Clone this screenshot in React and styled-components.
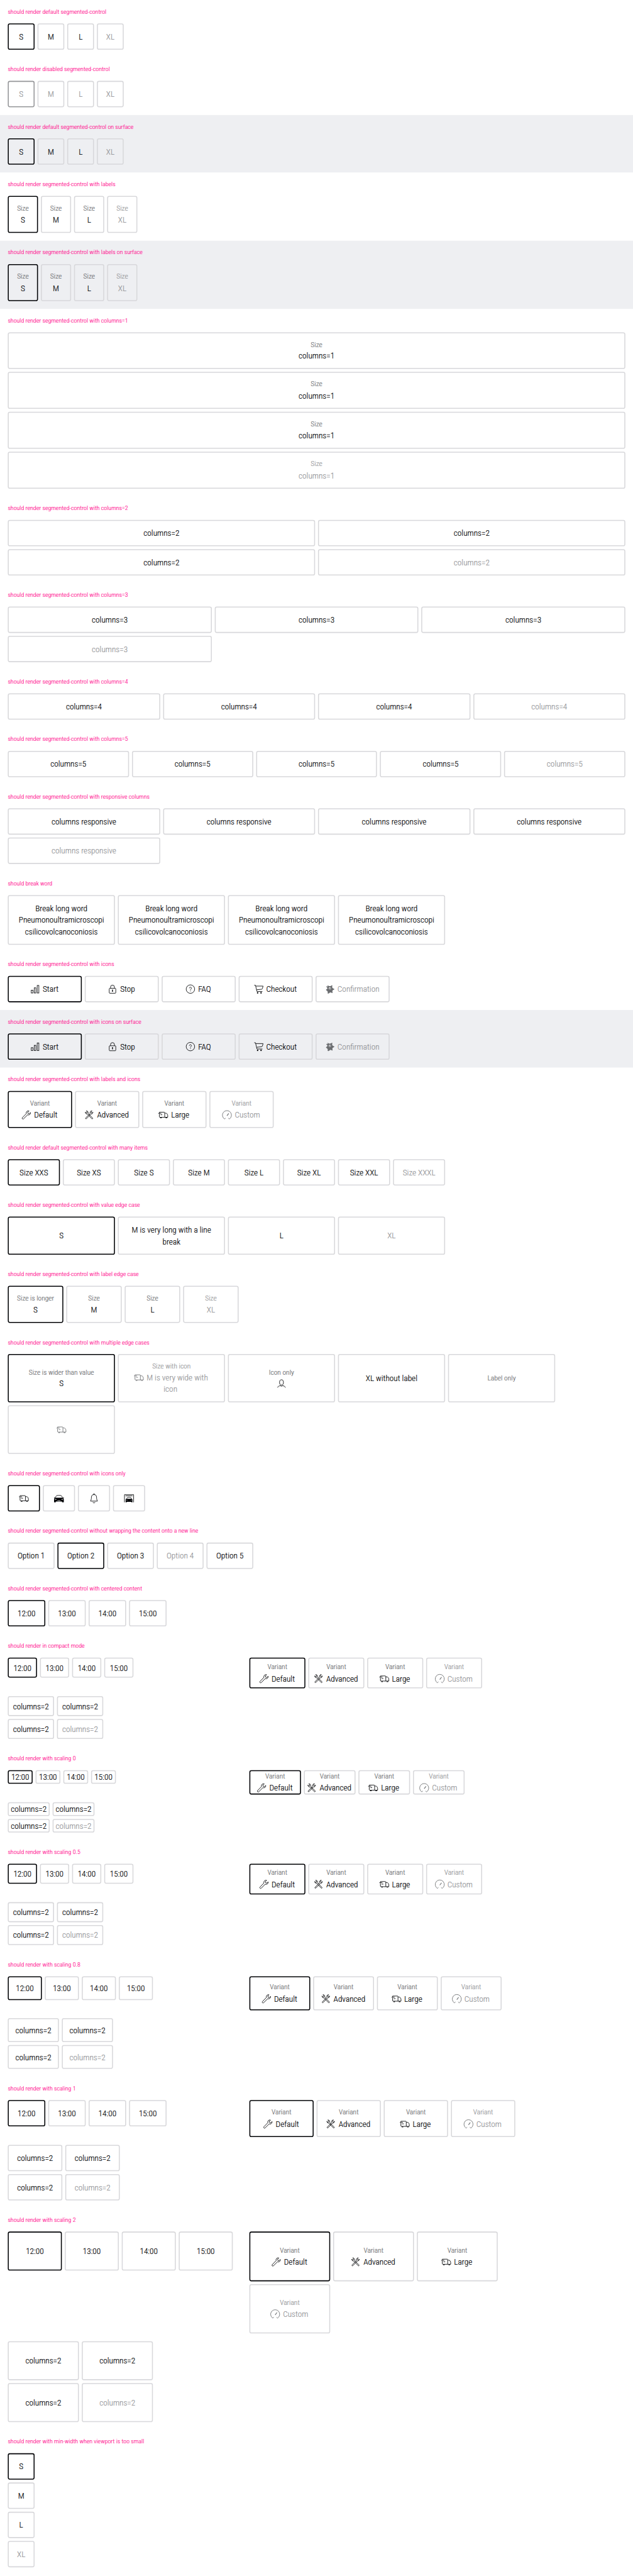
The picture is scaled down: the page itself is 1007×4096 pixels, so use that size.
import React from "react";
import styled, { createGlobalStyle, css } from "styled-components";

const color = {
  primary: "#010205",
  medium: "#6b6d70",
  disabled: "#949598",
  border: "#d8d8db",
  surface: "#eeeff2",
  heading: "#ff1493",
};

const GlobalStyle = createGlobalStyle`
  body {
    margin: 0;
    background: #fff;
    color: ${color.primary};
    font-family: "Roboto Condensed", Roboto, "Liberation Sans", sans-serif;
    font-weight: 300;
    -webkit-text-stroke: 0.22px currentColor;
  }
`;

const Viewport = styled.div`
  width: 1007px;
  height: 4096px;
  overflow: hidden;
`;

const Page = styled.main`
  width: 1300px;
  transform: scale(0.77475);
  transform-origin: 0 0;
  margin-right: -293px;
`;

const Section = styled.section`
  display: flex;
  flex-direction: column;
  gap: 16px;
  padding: 16px;
  background: ${(p) => (p.$surface ? color.surface : "transparent")};
`;

const Heading = styled.h2`
  margin: 0;
  height: 16px;
  font-size: 12.85px;
  line-height: 16px;
  font-weight: 300;
  color: ${color.heading};
  white-space: nowrap;
`;

const Group = styled.div`
  display: grid;
  grid-template-columns: repeat(${(p) => p.$cols}, ${(p) => (p.$width ? `${p.$width}px` : "1fr")});
  grid-auto-rows: 1fr;
  gap: 6px;
  align-self: start;
  width: ${(p) => (p.$width ? "max-content" : "100%")};
`;

const Segment = styled.button`
  display: flex;
  flex-direction: column;
  align-items: center;
  justify-content: center;
  box-sizing: border-box;
  margin: 0;
  padding: ${(p) => 13 * p.$scale}px 0;
  border: 2px solid ${color.border};
  border-radius: 4px;
  background: transparent;
  font: inherit;
  color: ${color.primary};
  white-space: nowrap;

  ${(p) => p.$selected && css`border-color: ${p.disabled ? color.disabled : color.primary};`}
  ${(p) => p.disabled && css`color: ${color.disabled};`}
`;

const Label = styled.span`
  font-size: 14.8px;
  line-height: 21.83px;
  color: ${(p) => (p.$disabled ? color.disabled : color.medium)};
`;

const Value = styled.span`
  display: block;
  font-size: 17.15px;
  line-height: 24px;
  text-align: center;
`;

const Line = styled.span`
  display: block;
  margin-left: ${(p) => (p.$hang ? "-4px" : "0")};
`;

const IconSvg = styled.svg`
  width: 24px;
  height: 24px;
  vertical-align: top;
  margin: ${(p) => (p.$alone ? "0" : "0 4px 0 -4px")};
  fill: none;
  stroke: currentColor;
  stroke-width: 1.1;
  color: ${(p) => (p.$disabled ? color.medium : color.primary)};

  .solid {
    fill: currentColor;
    stroke: none;
  }
`;

const Showcase = styled.div`
  display: grid;
  grid-template-columns: 480px 1fr;
  gap: 16px;
`;

const slimWrench =
  "M19.7 6.4l-1.6 2.200-1.800-.7-.1-2.100 1.600-1.900a3.600 3.600 0 0 0-3.600 5L4.900 18.600a1.050 1.050 0 0 0 1.600 1.400l9.300-9.600a3.600 3.600 0 0 0 3.900-4z";

const icons = {
  bars: (
    <>
      <rect x="4.2" y="14.2" width="3.4" height="5.8" />
      <rect x="10.3" y="9.4" width="3.4" height="10.6" />
      <rect x="16.4" y="4.5" width="3.4" height="15.5" />
    </>
  ),
  lock: (
    <>
      <rect x="5.3" y="10.3" width="13.4" height="10.2" rx="1.2" />
      <path d="M8 10.3V7.8a4 4 0 0 1 8 0v2.5" />
      <path d="M12 13v4.5" strokeWidth="1.8" />
    </>
  ),
  question: (
    <>
      <circle cx="12" cy="12" r="8.7" />
      <path d="M9.9 10.2c0-1.3.9-2.1 2.1-2.1s2.1.8 2.1 2c0 1.6-2 1.9-2 3.7" />
      <path d="M12.1 15.1v1.4" />
    </>
  ),
  cart: (
    <>
      <path d="M3 4h2.6l3 12.9h11.2" />
      <path d="M6.2 5.8h15l-1.4 5c-.3 1-.9 1.4-1.8 1.5L7.9 13.4" />
      <circle className="solid" cx="10" cy="19.8" r="1.5" />
      <circle className="solid" cx="17" cy="19.8" r="1.5" />
    </>
  ),
  blob: (
    <>
      <path
        className="solid"
        fillRule="evenodd"
        d="M7.5 4.200L11 6l2.600-.2L16.800 4l.6.5-.4 3.700 1.200 2 3.300 1.600-.1 1-3 1.500-.9 1.700.4 3.600-.8.500-3-1.400-1.800.5-2.300 1.800-2.200-.1.200-3-1-2-2.600-2 .2-.9 2.300-1.500.4-1.900-2.500-2.600.6-.7 2.500.5zM12.300 8.200a2.200 2.200 0 1 0 .01 0z"
      />
      <path className="solid" d="M11 10.500l2.200-1.300.9 1.600-1.500.6-.5 1.300z" />
    </>
  ),
  wrench: (
    <path d="M20.6 7.200l-2.600 2.600-2.400-.7-.7-2.400 2.600-2.600a4.300 4.300 0 0 0-5.500 5.400L3.900 17.900a1.700 1.700 0 0 0 2.400 2.400l8.400-8.300a4.300 4.300 0 0 0 5.900-4.800z" />
  ),
  tools: (
    <>
      <path d={slimWrench} />
      <path d={slimWrench} transform="matrix(-1 0 0 1 24 0)" />
    </>
  ),
  van: (
    <>
      <path d="M4.200 8.500V6.600h9.900c.7 0 1.100.4 1.100 1.100v9.400M4.200 10v6c0 .7.3 1.100 1 1.100h16.200v-3.600c0-2.600-1.900-4.900-4.400-4.900h-1.800" />
      <path d="M2 9h6.300M6.500 11.900h3.700" />
      <path d="M6 18.200h3M17 18.200h3" strokeWidth="1.500" />
    </>
  ),
  gauge: (
    <>
      <path d="M9.300 18.700l-2.200 1.900a9.300 9.300 0 1 1 9.800 0l-2.200-1.900" />
      <path d="M12 14l3.700-4.900" strokeWidth="1.400" />
    </>
  ),
  user: (
    <>
      <ellipse cx="12" cy="10.200" rx="4" ry="5.400" />
      <path d="M3.800 20.700c1.200-2.400 3.400-3.500 6-3.900l2.200 1.500 2.200-1.500c2.600.4 4.800 1.500 6 3.900" />
    </>
  ),
  car: (
    <>
      <path d="M4.800 11.300c.6-2.700 1.700-4.700 3-4.900 2.700-.5 5.700-.5 8.400 0 1.300.2 2.400 2.200 3 4.900" />
      <path
        className="solid"
        fillRule="evenodd"
        d="M4.500 11h15l2.500-.6v1.400l-.9.500.9 2v6h-3.600v-1.600H5.600v1.600H2v-6l.9-2-.9-.5v-1.400zM4 13.300v1.400l2.800.5v-1zM20 13.300l-2.800.9v1l2.800-.5zM8.500 16.500l.6 1h5.800l.6-1z"
      />
    </>
  ),
  bell: (
    <>
      <path d="M10.300 4.700c0-2.600 3.400-2.600 3.400 0" />
      <path d="M12 4.500c-3.400 0-5.300 2.100-5.300 5.500 0 3.200-.4 5-1.900 7.800h14.400c-1.500-2.800-1.900-4.600-1.900-7.800 0-3.400-1.900-5.500-5.300-5.500z" />
      <path d="M9.800 19.800c.3 2.300 4.100 2.300 4.400 0" />
    </>
  ),
  garage: (
    <>
      <path d="M2.600 20.300V4.600h18.800v15.700M4.800 7h14.400" />
      <path d="M7 14c.4-2.400 1.300-3.600 2-3.700 2-.4 4-.4 6 0 .7.1 1.600 1.300 2 3.700" />
      <path
        className="solid"
        fillRule="evenodd"
        d="M6.300 13.200h11.400l1.300.8v6.300h-2.300v-1.100H7.300v1.100H5V14zM6.700 15.200v.8l1.800.3v-.6zM17.300 15.200l-1.800.5v.6l1.800-.3z"
      />
    </>
  ),
};

function Icon({ name, alone, disabled }) {
  return (
    <IconSvg viewBox="0 0 24 24" $alone={alone} $disabled={disabled} aria-hidden="true">
      {icons[name]}
    </IconSvg>
  );
}

function SegmentedControl({ items, cols, width, scale = 1 }) {
  return (
    <Group $cols={cols || items.length} $width={width}>
      {items.map((item, i) => {
        const lines = item.lines || (item.text ? [item.text] : []);
        return (
          <Segment key={i} $scale={scale} $selected={item.selected} disabled={item.disabled}>
            {item.label && <Label $disabled={item.disabled}>{item.label}</Label>}
            {(lines.length > 0 || item.icon) && (
              <Value>
                {lines.length === 0 && <Icon name={item.icon} alone disabled={item.disabled} />}
                {lines.map((line, n) => (
                  <Line key={n} $hang={item.icon && n > 0}>
                    {n === 0 && item.icon && <Icon name={item.icon} disabled={item.disabled} />}
                    {line}
                  </Line>
                ))}
              </Value>
            )}
          </Segment>
        );
      })}
    </Group>
  );
}

const texts = (list, selected, disabled) =>
  list.map((text, i) => ({ text, selected: i === selected, disabled: i === disabled }));

const repeat = (text, count) => texts(Array(count).fill(text), -1, count - 1);

const sizes = texts(["S", "M", "L", "XL"], 0, 3);
const allDisabled = sizes.map((item) => ({ ...item, disabled: true }));
const labelled = sizes.map((item) => ({ ...item, label: "Size" }));
const steps = [
  { text: "Start", icon: "bars", selected: true },
  { text: "Stop", icon: "lock" },
  { text: "FAQ", icon: "question" },
  { text: "Checkout", icon: "cart" },
  { text: "Confirmation", icon: "blob", disabled: true },
];
const variants = [
  { label: "Variant", text: "Default", icon: "wrench", selected: true },
  { label: "Variant", text: "Advanced", icon: "tools" },
  { label: "Variant", text: "Large", icon: "van" },
  { label: "Variant", text: "Custom", icon: "gauge", disabled: true },
];
const longWord = Array(4).fill({
  lines: ["Break long word", "Pneumonoultramicroscopi", "csilicovolcanoconiosis"],
});
const manySizes = texts(
  ["Size XXS", "Size XS", "Size S", "Size M", "Size L", "Size XL", "Size XXL", "Size XXXL"],
  0,
  7
);
const valueEdge = [
  { text: "S", selected: true },
  { lines: ["M is very long with a line", "break"] },
  { text: "L" },
  { text: "XL", disabled: true },
];
const labelEdge = labelled.map((item, i) => (i === 0 ? { ...item, label: "Size is longer" } : item));
const multipleEdge = [
  { label: "Size is wider than value", text: "S", selected: true },
  { label: "Size with icon", lines: ["M is very wide with", "icon"], icon: "van", disabled: true },
  { label: "Icon only", icon: "user" },
  { text: "XL without label" },
  { label: "Label only" },
  { icon: "van", disabled: true },
];
const iconsOnly = [{ icon: "van", selected: true }, { icon: "car" }, { icon: "bell" }, { icon: "garage" }];
const options = texts(["Option 1", "Option 2", "Option 3", "Option 4", "Option 5"], 1, 3);
const times = texts(["12:00", "13:00", "14:00", "15:00"], 0, -1);

const base = "should render segmented-control with";

const sections = [
  { title: "should render default segmented-control", items: sizes, width: 55 },
  { title: "should render disabled segmented-control", items: allDisabled, width: 55 },
  { title: "should render default segmented-control on surface", items: sizes, width: 55, surface: true },
  { title: `${base} labels`, items: labelled, width: 62 },
  { title: `${base} labels on surface`, items: labelled, width: 62, surface: true },
  { title: `${base} columns=1`, items: repeat("columns=1", 4).map((i) => ({ ...i, label: "Size" })), cols: 1 },
  { title: `${base} columns=2`, items: repeat("columns=2", 4), cols: 2 },
  { title: `${base} columns=3`, items: repeat("columns=3", 4), cols: 3 },
  { title: `${base} columns=4`, items: repeat("columns=4", 4), cols: 4 },
  { title: `${base} columns=5`, items: repeat("columns=5", 5), cols: 5 },
  { title: `${base} responsive columns`, items: repeat("columns responsive", 5), cols: 4 },
  { title: "should break word", items: longWord, width: 220 },
  { title: `${base} icons`, items: steps, width: 152 },
  { title: `${base} icons on surface`, items: steps, width: 152, surface: true },
  { title: `${base} labels and icons`, items: variants, width: 132 },
  { title: "should render default segmented-control with many items", items: manySizes, width: 107 },
  { title: `${base} value edge case`, items: valueEdge, width: 220 },
  { title: `${base} label edge case`, items: labelEdge, width: 114 },
  { title: `${base} multiple edge cases`, items: multipleEdge, cols: 5, width: 220 },
  { title: `${base} icons only`, items: iconsOnly, width: 66 },
  { title: "should render segmented-control without wrapping the content onto a new line", items: options, width: 96 },
  { title: `${base} centered content`, items: times, width: 77 },
];

const scalings = [
  { title: "should render in compact mode", scale: 0.5, widths: [60, 115, 95] },
  { title: "should render with scaling 0", scale: 0, widths: [51, 106, 86] },
  { title: "should render with scaling 0.5", scale: 0.5, widths: [60, 115, 95] },
  { title: "should render with scaling 0.8", scale: 0.8, widths: [70, 125, 105] },
  { title: "should render with scaling 1", scale: 1, widths: [77, 132, 112] },
  { title: "should render with scaling 2", scale: 2, widths: [111, 166, 146], variantCols: 3 },
];

export default function App() {
  return (
    <Viewport>
      <GlobalStyle />
      <Page>
        {sections.map(({ title, surface, ...control }) => (
          <Section key={title} $surface={surface}>
            <Heading>{title}</Heading>
            <SegmentedControl {...control} />
          </Section>
        ))}
        {scalings.map(({ title, scale, widths, variantCols }) => (
          <Section key={title}>
            <Heading>{title}</Heading>
            <Showcase>
              <SegmentedControl items={times} width={widths[0]} scale={scale} />
              <SegmentedControl items={variants} cols={variantCols} width={widths[1]} scale={scale} />
              <SegmentedControl items={repeat("columns=2", 4)} cols={2} width={widths[2]} scale={scale} />
            </Showcase>
          </Section>
        ))}
        <Section>
          <Heading>should render with min-width when viewport is too small</Heading>
          <SegmentedControl items={sizes} cols={1} width={55} />
        </Section>
      </Page>
    </Viewport>
  );
}
